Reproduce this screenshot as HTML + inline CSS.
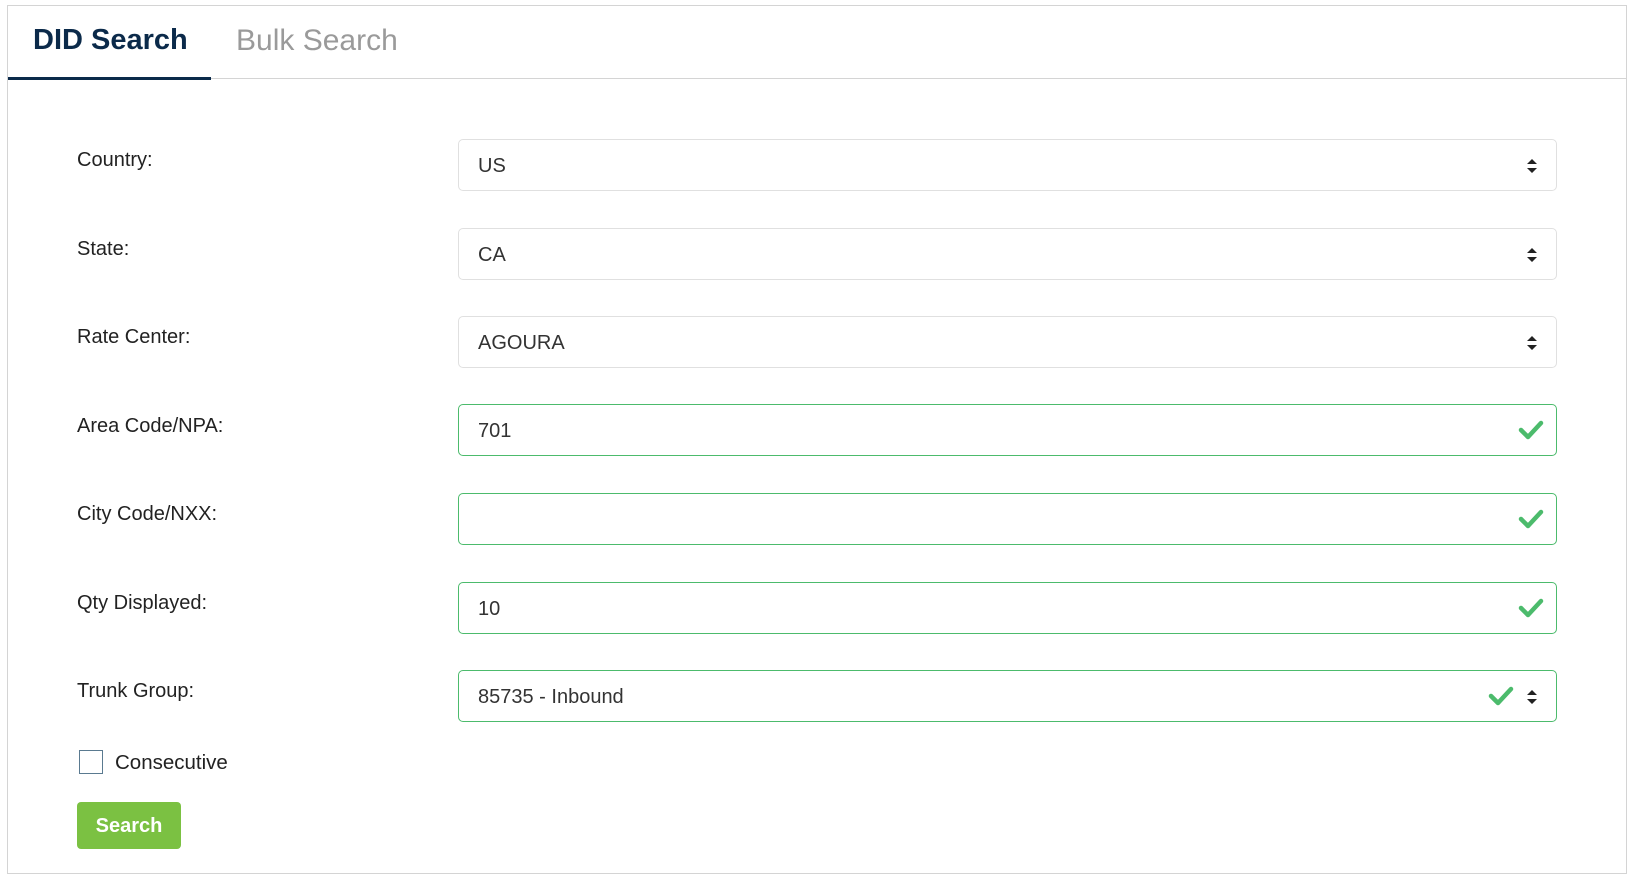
<!DOCTYPE html>
<html><head><style>
body{margin:0;width:1632px;height:880px;background:#fff;font-family:"Liberation Sans",Arial,sans-serif;position:relative;overflow:hidden}
.box{position:absolute;left:7px;top:5px;width:1620px;height:869px;border:1px solid #d4d4d4;box-sizing:border-box}
.tabline{position:absolute;left:8px;top:78px;width:1618px;height:1px;background:#d4d4d4}
.tabul{position:absolute;left:8px;top:77px;width:203px;height:3px;background:#0b2a4a}
.t1{position:absolute;left:33px;top:24px;font-size:29px;font-weight:bold;color:#0b2a4a}
.t2{position:absolute;left:236px;top:24px;font-size:30px;color:#9a9a9a}
.lab{position:absolute;left:77px;font-size:20px;color:#222}
.inp{position:absolute;left:458px;width:1099px;height:52px;border:1px solid #e0e0e0;border-radius:5px;box-sizing:border-box;font-size:20px;color:#333;padding-left:19px;line-height:52px}
.ok{border-color:#4cbb6c}
.arr{position:absolute;right:18px;top:18px}
.chk{position:absolute;right:12px;top:13px}
</style></head><body>
<div class="box"></div>
<div class="tabline"></div><div class="tabul"></div>
<div class="t1">DID Search</div><div class="t2">Bulk Search</div>

<div class="lab" style="top:149px">Country:</div>
<div class="inp" style="top:139px">US<svg class="arr" width="12" height="16" viewBox="0 0 12 16"><path d="M1 6L6 1L11 6Z M1 10L6 15L11 10Z" fill="#222"/></svg></div>
<div class="lab" style="top:238px">State:</div>
<div class="inp" style="top:228px">CA<svg class="arr" width="12" height="16" viewBox="0 0 12 16"><path d="M1 6L6 1L11 6Z M1 10L6 15L11 10Z" fill="#222"/></svg></div>
<div class="lab" style="top:326px">Rate Center:</div>
<div class="inp" style="top:316px">AGOURA<svg class="arr" width="12" height="16" viewBox="0 0 12 16"><path d="M1 6L6 1L11 6Z M1 10L6 15L11 10Z" fill="#222"/></svg></div>
<div class="lab" style="top:415px">Area Code/NPA:</div>
<div class="inp ok" style="top:404px">701<svg class="chk" width="26" height="24" viewBox="0 0 26 24"><path d="M3 12L10 19L23 5" stroke="#4cbb6c" stroke-width="4.5" fill="none" stroke-linecap="round" stroke-linejoin="round"/></svg></div>
<div class="lab" style="top:503px">City Code/NXX:</div>
<div class="inp ok" style="top:493px"><svg class="chk" width="26" height="24" viewBox="0 0 26 24"><path d="M3 12L10 19L23 5" stroke="#4cbb6c" stroke-width="4.5" fill="none" stroke-linecap="round" stroke-linejoin="round"/></svg></div>
<div class="lab" style="top:592px">Qty Displayed:</div>
<div class="inp ok" style="top:582px">10<svg class="chk" width="26" height="24" viewBox="0 0 26 24"><path d="M3 12L10 19L23 5" stroke="#4cbb6c" stroke-width="4.5" fill="none" stroke-linecap="round" stroke-linejoin="round"/></svg></div>
<div class="lab" style="top:680px">Trunk Group:</div>
<div class="inp ok" style="top:670px">85735 - Inbound<svg class="chk" style="right:42px" width="26" height="24" viewBox="0 0 26 24"><path d="M3 12L10 19L23 5" stroke="#4cbb6c" stroke-width="4.5" fill="none" stroke-linecap="round" stroke-linejoin="round"/></svg><svg class="arr" width="12" height="16" viewBox="0 0 12 16"><path d="M1 6L6 1L11 6Z M1 10L6 15L11 10Z" fill="#222"/></svg></div>

<div style="position:absolute;left:79px;top:750px;width:24px;height:24px;border:1px solid #5a7a90;box-sizing:border-box"></div>
<div class="lab" style="left:115px;top:751px;font-size:20.5px">Consecutive</div>
<div style="position:absolute;left:77px;top:802px;width:104px;height:47px;background:#7bc142;border-radius:4px;color:#fff;font-weight:bold;font-size:20px;text-align:center;line-height:48px">Search</div>
</body></html>
